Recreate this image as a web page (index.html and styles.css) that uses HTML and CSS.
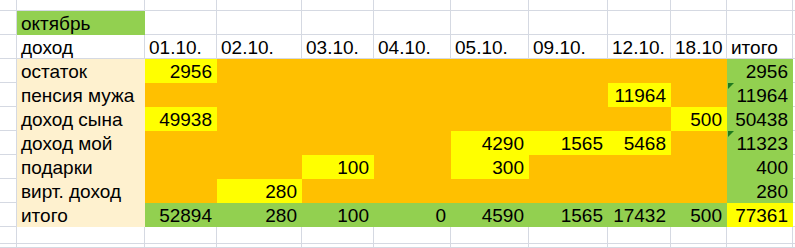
FILE: index.html
```html
<!DOCTYPE html>
<html lang="ru">
<head>
<meta charset="utf-8">
<title>октябрь</title>
<link rel="stylesheet" href="styles.css">
</head>
<body>
<div class="sheet">
  <!-- row 0 (partial) -->
  <div class="c"></div><div class="c"></div><div class="c"></div><div class="c"></div><div class="c"></div><div class="c"></div><div class="c"></div><div class="c"></div><div class="c"></div><div class="c"></div><div class="c"></div><div class="c"></div>
  <!-- row 1 -->
  <div class="c"></div><div class="c g">октябрь</div><div class="c"></div><div class="c"></div><div class="c"></div><div class="c"></div><div class="c"></div><div class="c"></div><div class="c"></div><div class="c"></div><div class="c"></div><div class="c"></div>
  <!-- row 2 -->
  <div class="c"></div><div class="c">доход</div><div class="c">01.10.</div><div class="c">02.10.</div><div class="c">03.10.</div><div class="c">04.10.</div><div class="c">05.10.</div><div class="c">09.10.</div><div class="c">12.10.</div><div class="c">18.10</div><div class="c">итого</div><div class="c"></div>
  <!-- row 3 -->
  <div class="c"></div><div class="c b">остаток</div><div class="c y r">2956</div><div class="c o"></div><div class="c o"></div><div class="c o"></div><div class="c o"></div><div class="c o"></div><div class="c o"></div><div class="c o"></div><div class="c g r">2956</div><div class="c"></div>
  <!-- row 4 -->
  <div class="c"></div><div class="c b">пенсия мужа</div><div class="c o"></div><div class="c o"></div><div class="c o"></div><div class="c o"></div><div class="c o"></div><div class="c o"></div><div class="c y r">11964</div><div class="c o"></div><div class="c g r t">11964</div><div class="c"></div>
  <!-- row 5 -->
  <div class="c"></div><div class="c b">доход сына</div><div class="c y r">49938</div><div class="c o"></div><div class="c o"></div><div class="c o"></div><div class="c o"></div><div class="c o"></div><div class="c o"></div><div class="c y r">500</div><div class="c g r">50438</div><div class="c"></div>
  <!-- row 6 -->
  <div class="c"></div><div class="c b">доход мой</div><div class="c o"></div><div class="c o"></div><div class="c o"></div><div class="c o"></div><div class="c y r">4290</div><div class="c y r">1565</div><div class="c y r">5468</div><div class="c o"></div><div class="c g r t">11323</div><div class="c"></div>
  <!-- row 7 -->
  <div class="c"></div><div class="c b">подарки</div><div class="c o"></div><div class="c o"></div><div class="c y r">100</div><div class="c o"></div><div class="c y r">300</div><div class="c o"></div><div class="c o"></div><div class="c o"></div><div class="c g r">400</div><div class="c"></div>
  <!-- row 8 -->
  <div class="c"></div><div class="c b">вирт. доход</div><div class="c o"></div><div class="c y r">280</div><div class="c o"></div><div class="c o"></div><div class="c o"></div><div class="c o"></div><div class="c o"></div><div class="c o"></div><div class="c g r">280</div><div class="c"></div>
  <!-- row 9 -->
  <div class="c"></div><div class="c b">итого</div><div class="c g r">52894</div><div class="c g r">280</div><div class="c g r">100</div><div class="c g r">0</div><div class="c g r">4590</div><div class="c g r">1565</div><div class="c g r">17432</div><div class="c g r">500</div><div class="c y r">77361</div><div class="c"></div>
  <!-- row 10 -->
  <div class="c"></div><div class="c"></div><div class="c"></div><div class="c"></div><div class="c"></div><div class="c"></div><div class="c"></div><div class="c"></div><div class="c"></div><div class="c"></div><div class="c"></div><div class="c"></div>
  <!-- row 11 (partial) -->
  <div class="c"></div><div class="c"></div><div class="c"></div><div class="c"></div><div class="c"></div><div class="c"></div><div class="c"></div><div class="c"></div><div class="c"></div><div class="c"></div><div class="c"></div><div class="c"></div>
</div>
</body>
</html>
```
FILE: styles.css
```css
html, body {
  margin: 0;
  padding: 0;
  background: #ffffff;
  overflow: hidden;
}

.sheet {
  display: grid;
  grid-template-columns: 17px 128px 72px 85px 72px 77px 78px 79px 63px 56px 66px 2px;
  grid-template-rows: 11px repeat(9, 24px) 17px 4px;
  width: 795px;
  height: 248px;
  font-family: "Liberation Sans", Arial, sans-serif;
  font-size: 19px;
  color: #000000;
}

.c {
  box-sizing: border-box;
  border-right: 1px solid #d5d9e2;
  border-bottom: 1px solid #d5d9e2;
  padding: 0 4px 0 4px;
  line-height: 26px;
  white-space: nowrap;
  overflow: hidden;
  position: relative;
}

.r { text-align: right; padding-right: 4px; }

.g { background: #92d050; border-color: transparent; }
.o { background: #ffc000; border-color: transparent; }
.y { background: #ffff00; border-color: transparent; }
.b { background: #fef1cf; border-color: transparent; }

.t::before {
  content: "";
  position: absolute;
  left: 1px;
  top: 0;
  width: 0;
  height: 0;
  border-top: 6px solid #1f7a1f;
  border-right: 6px solid transparent;
}
```
